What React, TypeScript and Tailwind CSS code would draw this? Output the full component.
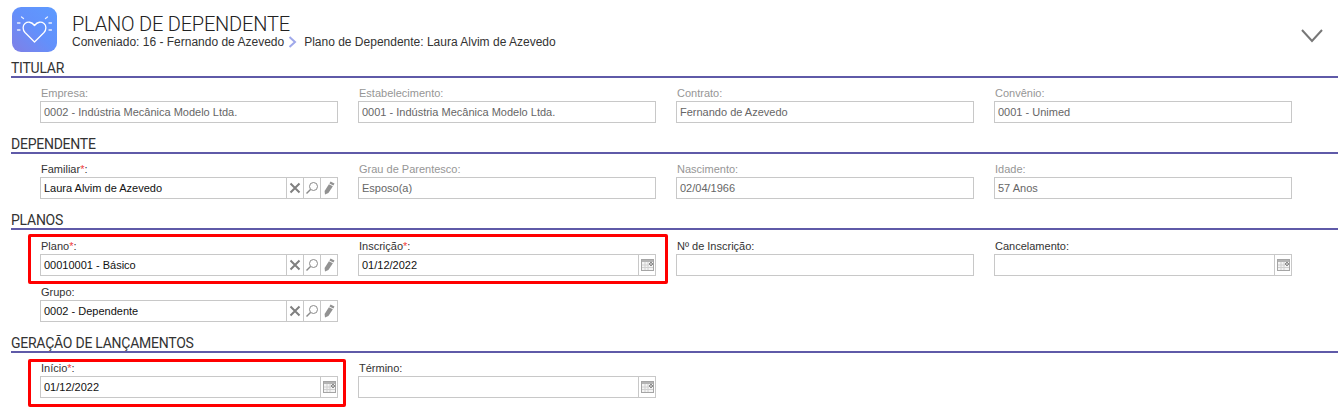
import React from 'react';

const FONT = "font-['Liberation_Sans',Arial,sans-serif]";

const HeartLogo: React.FC = () => (
  <div className="w-[45px] h-[45px] rounded-[9px] bg-gradient-to-tr from-[#7f7fe6] via-[#6390fb] to-[#5d9bff] flex items-center justify-center">
    <svg width="45" height="45" viewBox="0 0 45 45" fill="none" stroke="#fff" strokeWidth="1.3" strokeLinecap="round" strokeLinejoin="round">
      <path d="M22.5 35 L13 25.5 C10.5 22.5 10.5 18.5 13 16.5 C15.5 14.5 19.5 14.5 22.5 18.5 C25.5 14.5 29.5 14.5 32 16.5 C34.5 18.5 34.5 22.5 32 25.5 Z" />
      <path d="M9.5 10 L11.5 11.5 M35.5 10 L33.5 11.5 M5.5 16 H8 M37 16 H39.5 M5.5 23 H8 M37 23 H39.5" strokeOpacity="0.85" />
    </svg>
  </div>
);

const XIcon: React.FC = () => (
  <svg width="12" height="12" viewBox="0 0 12 12" stroke="#808080" strokeWidth="2" fill="none">
    <path d="M1.5 1.5 L10.5 10.5 M10.5 1.5 L1.5 10.5" />
  </svg>
);

const SearchIcon: React.FC = () => (
  <svg width="14" height="14" viewBox="0 0 14 14" stroke="#8a8a8a" fill="none">
    <circle cx="8.5" cy="5.5" r="4" strokeWidth="1" />
    <path d="M5.5 8.5 L1.5 12.5" strokeWidth="1.5" />
  </svg>
);

const PencilIcon: React.FC = () => (
  <svg width="12" height="14" viewBox="0 0 12 14" fill="#929292">
    <path d="M7.5 0.5 L11.5 2.5 L10.4 4.4 L6.4 2.4 Z" />
    <path d="M5.9 3.2 L9.9 5.2 L5.4 12 L2 13.5 L1.6 10 Z" />
  </svg>
);

const CalendarIcon: React.FC = () => (
  <svg width="13" height="12" viewBox="0 0 13 12">
    <rect x="0.5" y="0.5" width="12" height="11" fill="#f4f4f4" stroke="#a5a5a5" />
    <rect x="1" y="1" width="11" height="2" fill="#b4b4b4" />
    <path d="M1 6 H12 M1 8.5 H12 M4 3 V11 M7 3 V11" stroke="#d0d0d0" strokeWidth="1" />
    <rect x="8" y="3" width="4" height="4" fill="#fff" />
    <circle cx="10" cy="5" r="1.4" fill="none" stroke="#666" strokeWidth="1" />
  </svg>
);

type FieldProps = {
  label: string;
  value?: string;
  required?: boolean;
  disabled?: boolean;
  kind?: 'text' | 'lookup' | 'date';
};

const Field: React.FC<FieldProps> = ({ label, value, required, disabled, kind = 'text' }) => (
  <div className="w-[298px]">
    <div className={`h-[16px] pl-[1px] text-[11px] leading-[17px] ${disabled ? 'text-[#969696]' : 'text-[#333]'}`}>
      {label}
      {required && <span className="text-[#f04040]">*</span>}:
    </div>
    <div className="h-[22px] border border-[#c8c8c8] bg-white flex items-center">
      <div className={`flex-1 px-[3px] text-[11px] truncate ${disabled ? 'text-[#666]' : 'text-[#111]'}`}>{value}</div>
      {kind === 'lookup' && (
        <>
          <div className="w-[17px] h-full border-l border-[#c8c8c8] flex items-center justify-center"><XIcon /></div>
          <div className="w-[17px] h-full border-l border-[#c8c8c8] flex items-center justify-center"><SearchIcon /></div>
          <div className="w-[17px] h-full border-l border-[#c8c8c8] flex items-center justify-center"><PencilIcon /></div>
        </>
      )}
      {kind === 'date' && (
        <div className="w-[17px] h-full border-l border-[#c8c8c8] flex items-center justify-center"><CalendarIcon /></div>
      )}
    </div>
  </div>
);

const SectionTitle: React.FC<{ title: string }> = ({ title }) => (
  <h2 className="h-[17px] border-b-2 border-[#5f5aa8] font-['Roboto',sans-serif] text-[14px] leading-[18px] tracking-[-0.25px] text-[#333] box-content">{title}</h2>
);

const Row: React.FC<{ children: React.ReactNode }> = ({ children }) => (
  <div className="flex gap-[20px] pl-[29px]">{children}</div>
);

export default function App() {
  return (
    <div className={`w-[1338px] h-[414px] bg-white overflow-hidden pl-[11px] ${FONT}`}>
      {/* cabecalho */}
      <div className="flex items-start pt-[7px] h-[59px] relative">
        <div className="ml-[1px]"><HeartLogo /></div>
        <div className="ml-[15px] pt-[6px]">
          <h1 className="font-['Roboto',sans-serif] font-light text-[20px] leading-[22px] tracking-[-0.2px] text-[#222]">PLANO DE DEPENDENTE</h1>
          <div className="flex items-center text-[12px] leading-[14px] text-[#333]">
            <span>Conveniado: 16 - Fernando de Azevedo</span>
            <svg className="ml-[4px] mr-[7px]" width="9" height="12" viewBox="0 0 9 12" fill="none" stroke="#9fa8ea" strokeWidth="2">
              <path d="M1.5 1 L7 6 L1.5 11" />
            </svg>
            <span>Plano de Dependente: Laura Alvim de Azevedo</span>
          </div>
        </div>
        <svg className="absolute right-[14px] top-[28px]" width="24" height="16" viewBox="0 0 24 16" fill="none" stroke="#777" strokeWidth="2">
          <path d="M2 2 L12 13 L22 2" />
        </svg>
      </div>

      <section>
        <SectionTitle title="TITULAR" />
        <div className="pt-[7px] pb-[12px]">
          <Row>
            <Field label="Empresa" value="0002 - Indústria Mecânica Modelo Ltda." disabled />
            <Field label="Estabelecimento" value="0001 - Indústria Mecânica Modelo Ltda." disabled />
            <Field label="Contrato" value="Fernando de Azevedo" disabled />
            <Field label="Convênio" value="0001 - Unimed" disabled />
          </Row>
        </div>
      </section>

      <section>
        <SectionTitle title="DEPENDENTE" />
        <div className="pt-[7px] pb-[12px]">
          <Row>
            <Field label="Familiar" value="Laura Alvim de Azevedo" required kind="lookup" />
            <Field label="Grau de Parentesco" value="Esposo(a)" disabled />
            <Field label="Nascimento" value="02/04/1966" disabled />
            <Field label="Idade" value="57 Anos" disabled />
          </Row>
        </div>
      </section>

      <section className="relative">
        <SectionTitle title="PLANOS" />
        <div className="pt-[8px] pb-[12px] flex flex-col gap-[8px]">
          <Row>
            <Field label="Plano" value="00010001 - Básico" required kind="lookup" />
            <Field label="Inscrição" value="01/12/2022" required kind="date" />
            <Field label="Nº de Inscrição" />
            <Field label="Cancelamento" kind="date" />
          </Row>
          <Row>
            <Field label="Grupo" value="0002 - Dependente" kind="lookup" />
          </Row>
        </div>
        <div className="absolute left-[17px] top-[23px] w-[640px] h-[50px] border-[3px] border-[#f00] rounded-[2px]" />
      </section>

      <section className="relative">
        <SectionTitle title="GERAÇÃO DE LANÇAMENTOS" />
        <div className="pt-[7px]">
          <Row>
            <Field label="Início" value="01/12/2022" required kind="date" />
            <Field label="Término" kind="date" />
          </Row>
        </div>
        <div className="absolute left-[17px] top-[25px] w-[318px] h-[48px] border-[3px] border-[#f00] rounded-[2px]" />
      </section>
    </div>
  );
}
